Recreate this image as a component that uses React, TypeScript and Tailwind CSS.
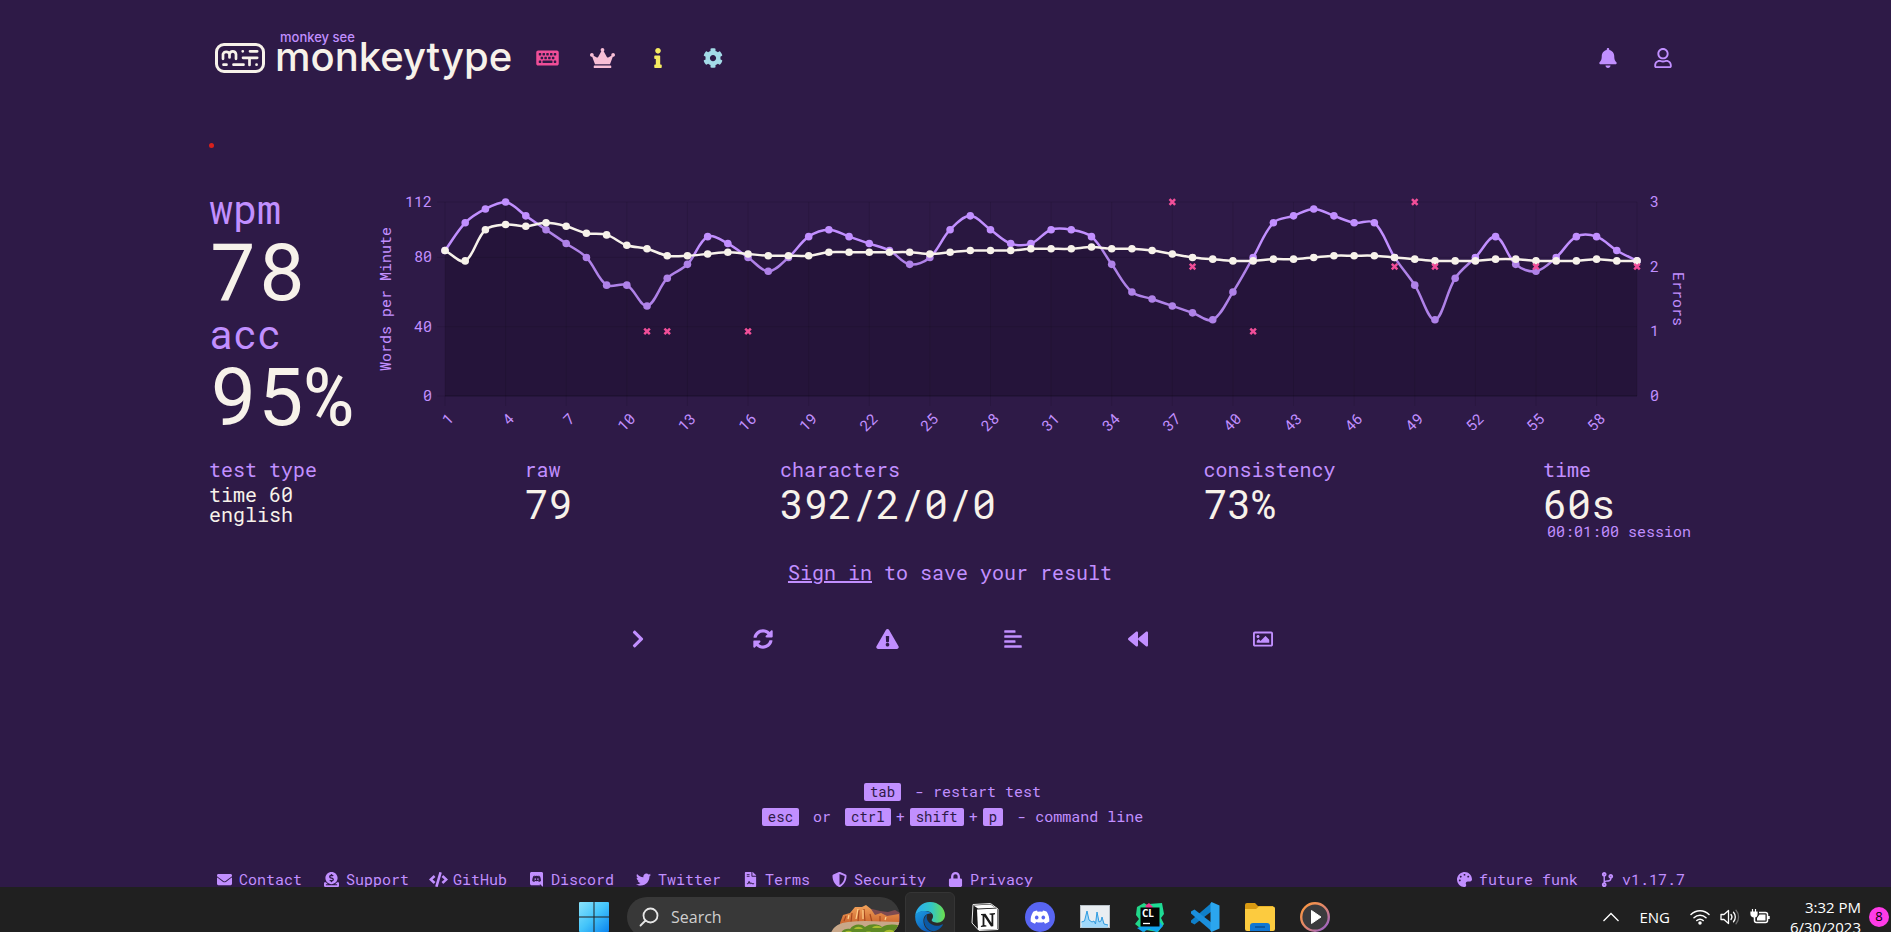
import type { ReactNode } from "react";
import {
  FaAlignLeft,
  FaBackward,
  FaBell,
  FaChevronRight,
  FaCode,
  FaCodeBranch,
  FaCog,
  FaCrown,
  FaDonate,
  FaEnvelope,
  FaExclamationTriangle,
  FaFileContract,
  FaInfo,
  FaKeyboard,
  FaLock,
  FaPalette,
  FaRegImage,
  FaRegUser,
  FaShieldAlt,
  FaSyncAlt,
  FaTwitter,
} from "react-icons/fa";

const RAW = [
  84, 100, 108, 112, 104, 96, 88, 80, 64, 64, 52, 68, 76, 92, 88, 80, 72, 80, 92, 96,
  92, 88, 84, 76, 80, 96, 104, 96, 88, 88, 96, 96, 92, 76, 60, 56, 52, 48, 44, 60,
  80, 100, 104, 108, 104, 100, 100, 80, 64, 44, 68, 80, 92, 76, 72, 80, 92, 92, 84, 78,
];
const WPM = [
  84, 78, 96, 99, 98, 100, 98, 94, 93, 87, 85, 81, 81, 82, 83, 82, 81, 81, 81, 83,
  83, 83, 83, 83, 82, 83, 84, 84, 84, 85, 85, 85, 86, 85, 85, 84, 82, 80, 79, 78,
  78, 79, 79, 80, 81, 81, 81, 80, 79, 78, 78, 78, 79, 79, 78, 78, 78, 79, 78, 78,
];
const ERRORS: [number, number][] = [
  [11, 1], [12, 1], [16, 1], [37, 3], [38, 2], [41, 1], [48, 2], [49, 3], [50, 2], [55, 2], [60, 2],
];

const LEFT = 70;
const RIGHT = 1262;
const TOP = 12;
const BOTTOM = 206;
const xAt = (second: number) => LEFT + ((second - 1) * (RIGHT - LEFT)) / 59;
const yAt = (value: number, max: number) => BOTTOM - (value * (BOTTOM - TOP)) / max;

type Point = { x: number; y: number };

function smoothPath(points: Point[], tension = 0.35) {
  const clamp = (y: number) => Math.min(BOTTOM, Math.max(TOP, y));
  const handles = points.map((p, i) => {
    const prev = points[Math.max(0, i - 1)];
    const next = points[Math.min(points.length - 1, i + 1)];
    const before = Math.hypot(p.x - prev.x, p.y - prev.y);
    const after = Math.hypot(next.x - p.x, next.y - p.y);
    const a = (tension * before) / (before + after);
    const b = (tension * after) / (before + after);
    return {
      inX: p.x - a * (next.x - prev.x),
      inY: clamp(p.y - a * (next.y - prev.y)),
      outX: p.x + b * (next.x - prev.x),
      outY: clamp(p.y + b * (next.y - prev.y)),
    };
  });
  return points
    .map((p, i) =>
      i === 0
        ? `M${p.x} ${p.y}`
        : `C${handles[i - 1].outX} ${handles[i - 1].outY} ${handles[i].inX} ${handles[i].inY} ${p.x} ${p.y}`,
    )
    .join("");
}

function Series({ values, className }: { values: number[]; className: string }) {
  const points = values.map((v, i) => ({ x: xAt(i + 1), y: yAt(v, 112) }));
  const line = smoothPath(points);
  return (
    <g className={className}>
      <path d={`${line}L${RIGHT} ${BOTTOM}L${LEFT} ${BOTTOM}Z`} fill="#000" fillOpacity="0.09" />
      <path d={line} fill="none" stroke="currentColor" strokeWidth="2.5" />
      {points.map((p) => (
        <circle key={p.x} cx={p.x} cy={p.y} r="3.8" fill="currentColor" />
      ))}
    </g>
  );
}

function ResultChart() {
  const ticks = Array.from({ length: 20 }, (_, i) => 1 + i * 3);
  return (
    <svg
      viewBox="0 0 1316 250"
      className="block w-full text-[#c18fff]"
      role="img"
      aria-label="Words per minute and errors over time"
      fontSize="15"
      fill="currentColor"
    >
      <g stroke="#000" strokeOpacity="0.1">
        {[0, 40, 80, 112].map((v) => (
          <line key={v} x1={LEFT - 8} x2={RIGHT} y1={yAt(v, 112)} y2={yAt(v, 112)} />
        ))}
        {[...ticks, 60].map((t) => (
          <line key={t} x1={xAt(t)} x2={xAt(t)} y1={TOP} y2={t === 60 ? BOTTOM : BOTTOM + 10} />
        ))}
        <line x1={LEFT} x2={RIGHT} y1={BOTTOM} y2={BOTTOM} strokeOpacity="0.2" />
      </g>
      <Series values={RAW} className="text-[#c18fff]" />
      <Series values={WPM} className="text-[#f7f2ea]" />
      <g stroke="#f04e98" strokeWidth="2.5">
        {ERRORS.map(([t, n]) => {
          const x = xAt(t);
          const y = yAt(n, 3);
          return <path key={t} d={`M${x - 2.8} ${y - 2.8}l5.6 5.6m0 -5.6l-5.6 5.6`} />;
        })}
      </g>
      {[0, 40, 80, 112].map((v) => (
        <text key={v} x="57" y={yAt(v, 112)} dy="5" textAnchor="end">{v}</text>
      ))}
      {[0, 1, 2, 3].map((v) => (
        <text key={v} x="1275" y={yAt(v, 3)} dy="5">{v}</text>
      ))}
      {ticks.map((t) => (
        <text key={t} transform={`translate(${xAt(t) + 6} 226) rotate(-45)`} dy="5" textAnchor="end">{t}</text>
      ))}
      <text transform="translate(16 109) rotate(-90)" textAnchor="middle">Words per Minute</text>
      <text transform="translate(1298 109) rotate(90)" textAnchor="middle">Errors</text>
    </svg>
  );
}

function LogoMark() {
  return (
    <svg viewBox="0 0 50 30" className="h-[30px] w-[50px]" fill="none" stroke="currentColor" strokeLinecap="round" aria-hidden="true">
      <rect x="1.5" y="1.5" width="47" height="27" rx="7.5" strokeWidth="3" />
      <g strokeWidth="2.7">
        <path d="M8 15.8V11.200a3.400 3.400 0 0 1 6.500 0v3.200M14.500 11.200a3.300 3.300 0 0 1 6.500 0v4.600" />
        <path d="M27.700 8.300h.1M35 8.300h7.200M28 14.800h14.200M34.500 15v7" />
        <path d="M8.500 21.700h3M18.500 21.700h10M41.500 21.700h.1" />
      </g>
    </svg>
  );
}

function IconButton({ label, className = "", children }: { label: string; className?: string; children: ReactNode }) {
  return (
    <button type="button" aria-label={label} className={`flex h-10 w-[55px] items-center justify-center text-xl ${className}`}>
      {children}
    </button>
  );
}

function Header() {
  return (
    <header className="flex h-10 items-center justify-between pr-px">
      <div className="flex items-center">
        <a href="#home" className="relative flex items-center gap-[10px] pl-[6px] text-[#f7f2ea]">
          <LogoMark />
          <span className="absolute -top-[8px] left-[71px] font-[Inter,sans-serif] text-[13px] leading-4 font-medium whitespace-nowrap text-[#c18fff]">
            monkey see
          </span>
          <span className="pb-[2px] font-[Inter,sans-serif] text-[40px] leading-10 font-medium">monkeytype</span>
        </a>
        <nav className="flex pl-2">
          <IconButton label="Start test" className="text-[#f04e98]"><FaKeyboard className="h-5 w-[23px]" /></IconButton>
          <IconButton label="Leaderboards" className="text-[#f8bed6]"><FaCrown className="h-5 w-[25px]" /></IconButton>
          <IconButton label="About" className="text-[#f6eb61]"><FaInfo /></IconButton>
          <IconButton label="Settings" className="text-[#a4dbe8]"><FaCog /></IconButton>
        </nav>
      </div>
      <div className="flex">
        <IconButton label="Notifications"><FaBell /></IconButton>
        <IconButton label="Account"><FaRegUser /></IconButton>
      </div>
    </header>
  );
}

function Headline({ label, value }: { label: string; value: string }) {
  return (
    <div>
      <div className="text-[40px] leading-[45px]">{label}</div>
      <div className="text-[80px] leading-[76px] text-[#f7f2ea]">{value}</div>
    </div>
  );
}

function Stat({ label, value }: { label: string; value: string }) {
  return (
    <div>
      <div className="text-xl leading-[30px]">{label}</div>
      <div className="text-[40px] leading-10 text-[#f7f2ea]">{value}</div>
    </div>
  );
}

function Key({ children }: { children: ReactNode }) {
  return (
    <kbd className="mx-[5px] inline-block rounded-[2px] bg-[#c18fff] px-1.5 font-[inherit] text-sm leading-[18px] text-[#2e1a47]">
      {children}
    </kbd>
  );
}

function DiscordBubble() {
  return (
    <svg viewBox="0 0 448 512" className="h-[15px]" fill="currentColor" aria-hidden="true">
      <path d="M297.216 243.2c0 15.616-11.52 28.416-26.112 28.416-14.336 0-26.112-12.8-26.112-28.416s11.52-28.416 26.112-28.416c14.592 0 26.112 12.8 26.112 28.416zm-119.552-28.416c-14.592 0-26.112 12.8-26.112 28.416s11.776 28.416 26.112 28.416c14.592 0 26.112-12.8 26.112-28.416.256-15.616-11.52-28.416-26.112-28.416zM448 52.736V512c-64.494-56.994-43.868-38.128-118.784-107.776l13.568 47.36H52.48C23.552 451.584 0 428.032 0 398.848V52.736C0 23.552 23.552 0 52.48 0h343.04C424.448 0 448 23.552 448 52.736zm-72.96 242.688c0-82.432-36.864-149.248-36.864-149.248-36.864-27.648-71.936-26.88-71.936-26.88l-3.584 4.096c43.52 13.312 63.744 32.512 63.744 32.512-60.811-33.329-132.244-33.335-191.232-7.424-9.472 4.352-15.104 7.424-15.104 7.424s21.248-20.224 67.328-33.536l-2.56-3.072s-35.072-.768-71.936 26.88c0 0-36.864 66.816-36.864 149.248 0 0 21.504 37.12 78.08 38.912 0 0 9.472-11.52 17.152-21.248-32.512-9.728-44.8-30.208-44.8-30.208 3.766 2.636 9.976 6.053 10.496 6.4 43.21 24.198 104.588 32.126 159.744 8.96 8.96-3.328 18.944-8.192 29.44-15.104 0 0-12.8 20.992-46.336 30.464 7.68 9.728 16.896 20.736 16.896 20.736 56.576-1.792 78.336-38.912 78.336-38.912z" />
    </svg>
  );
}

function FooterLink({ icon, children }: { icon: ReactNode; children: ReactNode }) {
  return (
    <a href="#footer" className="flex items-center gap-[5px] whitespace-nowrap">
      <span className="flex w-[19px] shrink-0 justify-center">{icon}</span>
      {children}
    </a>
  );
}

function TaskItem({ label, active = false, children }: { label: string; active?: boolean; children: ReactNode }) {
  return (
    <button
      type="button"
      aria-label={label}
      className={`flex size-[50px] shrink-0 items-center justify-center rounded-md ${active ? "border border-[#353535] bg-[#2b2b2b]" : ""}`}
    >
      {children}
    </button>
  );
}

function WindowsIcon() {
  return (
    <svg viewBox="0 0 30 30" className="size-[30px]" aria-hidden="true">
      <defs>
        <linearGradient id="win" x1="0" y1="0" x2="1" y2="1">
          <stop offset="0" stopColor="#8be3fb" />
          <stop offset="0.5" stopColor="#43c4fa" />
          <stop offset="1" stopColor="#0a84f0" />
        </linearGradient>
      </defs>
      <path d="M1 0h13.500v14.500H0V1a1 1 0 0 1 1-1zM15.500 0H29a1 1 0 0 1 1 1v13.500H15.500zM0 15.500h14.500V30H1a1 1 0 0 1-1-1zM15.500 15.500H30V29a1 1 0 0 1-1 1H15.500z" fill="url(#win)" />
    </svg>
  );
}

function CanyonArt() {
  return (
    <svg viewBox="0 0 70 40" className="h-10 w-[70px]" aria-hidden="true">
      <defs>
        <linearGradient id="rock" x1="0" y1="0" x2="0" y2="1">
          <stop offset="0" stopColor="#f3a45c" />
          <stop offset="1" stopColor="#c9602a" />
        </linearGradient>
      </defs>
      <path d="M36 13l6-1 8 2 8 1 7-2 5 3v14H36z" fill="#7d4a50" />
      <path d="M10 26l3-8 7-2 5-6 7 0 4-2 5 4 4 6 6-2 6 3 12-2v11H10z" fill="url(#rock)" />
      <path d="M14 24l2-5m5 6l1-9m6 9l1-12m6 12l-1-13m8 13l-2-8m10 8v-6" stroke="#a8481f" strokeWidth="1.200" fill="none" />
      <path d="M18 22l1-4m7 4l2-10m5 10v-9m22 10l1-3" stroke="#ffd08a" strokeWidth="1.200" fill="none" />
      <path d="M0 40c1-9 8-14 18-15 18-2 34 0 52 0v15z" fill="#c8a789" />
      <path d="M10 40c0-6 5-9 10-8 3-5 11-6 15-2 6-4 14-3 17 0 6-3 12-3 18-1v11z" fill="#5f8a24" />
      <path d="M24 32c2-3 7-3 9 0zM42 31c2-3 8-3 10 0zM14 36c2-3 7-3 9 0zM54 35c3-3 8-3 11 0zM34 36c2-2 7-2 9 0z" fill="#a9bd2f" />
    </svg>
  );
}

function EdgeIcon() {
  return (
    <svg viewBox="0 0 256 256" className="size-[30px]" aria-hidden="true">
      <defs>
        <linearGradient id="edgeA" x1="0.100" y1="0.300" x2="1" y2="0.300">
          <stop offset="0" stopColor="#2bb1ee" />
          <stop offset="0.500" stopColor="#33c6c4" />
          <stop offset="1" stopColor="#6ce04c" />
        </linearGradient>
        <linearGradient id="edgeB" x1="0" y1="0" x2="0.600" y2="1">
          <stop offset="0" stopColor="#1b9de2" />
          <stop offset="1" stopColor="#0f5cb8" />
        </linearGradient>
      </defs>
      <path d="M2 116C8 50 62 0 128 0c76 0 128 56 128 110 0 42-32 66-68 66-30 0-46-12-46-20 0-8 12-12 12-34 0-24-24-46-62-46-44 0-78 18-90 40z" fill="url(#edgeA)" />
      <path d="M2 116C10 92 44 74 84 76c24 1 46 10 58 24-40-8-70 18-70 62 0 50 36 84 74 92-6 1-12 2-18 2C56 256-4 196 2 116z" fill="url(#edgeB)" />
      <path d="M106 106c-20 12-30 34-28 60 4 46 40 82 84 84 30-6 56-26 74-52 4-6-1-9-6-6-14 8-32 12-48 10-44-4-80-36-82-70 0-10 2-18 6-26z" fill="#0c59a4" />
    </svg>
  );
}

function NotionIcon() {
  return (
    <svg viewBox="0 0 28 28" className="size-7" aria-hidden="true">
      <path d="M2 1.500L19.500.5 27 6v20.500L8 27.500 1 20z" fill="#191919" stroke="#e8e8e8" strokeLinejoin="round" />
      <path d="M6 6.500L26 5.500V26L7 27z" fill="#fff" />
      <path d="M2.500 2.500l17-1 5 3.200L7 5.600z" fill="#fff" />
      <path d="M10 11l4.500-.3 6 9.300v-8l-2-.5V10.400l5.500-.4v1.200l-1.700.6v11.400l-2.300.2-6.600-10v8.600l2 .5v1.100l-5.500.3v-1l1.700-.7V12.500l-1.600-.4z" fill="#191919" />
    </svg>
  );
}

function DiscordAppIcon() {
  return (
    <svg viewBox="0 0 30 30" className="size-[30px]" aria-hidden="true">
      <circle cx="15" cy="15" r="15" fill="#5865f2" />
      <path d="M12 8.500l.6 1.200a15 15 0 0 1 4.800 0l.6-1.200c1.500.2 2.700.6 3.800 1.300 2 3.200 2.700 6.400 2.500 9.700a13 13 0 0 1-4.300 2.200l-1.100-1.800a14 14 0 0 1-7.800 0L10 21.700a13 13 0 0 1-4.300-2.200c-.3-3.300.5-6.500 2.500-9.700 1.100-.7 2.300-1.100 3.800-1.300z" fill="#fff" />
      <ellipse cx="11.700" cy="15.600" rx="1.800" ry="2" fill="#5865f2" />
      <ellipse cx="18.300" cy="15.600" rx="1.800" ry="2" fill="#5865f2" />
    </svg>
  );
}

function MonitorIcon() {
  return (
    <svg viewBox="0 0 30 24" className="h-6 w-[30px]" aria-hidden="true">
      <rect x="0.500" y="0.500" width="29" height="22" fill="#e9eef2" stroke="#b9c2c9" />
      <path d="M1.500 17l3-1L7 6l2 9 3 2 2-1 1.500 3 1.500-12 2 10 2-1 1-4 2 7 4 1v2.500h-26.500z" fill="#9fd8fb" />
      <path d="M1.500 17l3-1L7 6l2 9 3 2 2-1 1.500 3 1.500-12 2 10 2-1 1-4 2 7 4 1" fill="none" stroke="#2f9be0" />
    </svg>
  );
}

function CLionIcon() {
  return (
    <svg viewBox="0 0 30 30" className="size-[30px]" aria-hidden="true">
      <path d="M2 5l7-4 5 3L10 30 0 22l4-5-3-4z" fill="#21d789" />
      <path d="M14 2l13-1 2 11-3 4 3 6-6 8-12-2z" fill="#1edb95" />
      <path d="M8 24l17-4 3 4-6 6-8-3-6 3-6-4z" fill="#12a4f0" />
      <path d="M10 4l4-3 4 4-4 4z" fill="#ed358c" />
      <rect x="5.500" y="5.500" width="19" height="19" fill="#050505" />
      <text x="7" y="15" fontSize="10" fontWeight="700" fontFamily="Open Sans, sans-serif" fill="#fff">CL</text>
      <path d="M8 21.500h7" stroke="#fff" strokeWidth="1.300" />
    </svg>
  );
}

function CodeEditorIcon() {
  return (
    <svg viewBox="0 0 30 30" className="size-[30px]" aria-hidden="true">
      <path d="M22 0.500V9L4.500 22.500 1 20.500v-2z" fill="#0f7fc9" />
      <path d="M22 29.500V21L4.500 7.500 1 9.500v2z" fill="#1b8fdc" />
      <path d="M21.500 0L29.500 3.500v23L21.500 30l-1-1.500v-27z" fill="#2ba6ee" />
    </svg>
  );
}

function FolderIcon() {
  return (
    <svg viewBox="0 0 30 28" className="h-7 w-[30px]" aria-hidden="true">
      <path d="M0 2a2 2 0 0 1 2-2h8l3 3h15v9H0z" fill="#d99a12" />
      <path d="M0 6h11l3-2.500h14a2 2 0 0 1 2 2V26a2 2 0 0 1-2 2H2a2 2 0 0 1-2-2z" fill="#fccb3f" />
      <path d="M5 28v-5a3 3 0 0 1 3-3h14a3 3 0 0 1 3 3v5z" fill="#1277d3" />
      <path d="M10 24h10" stroke="#0b4f94" strokeWidth="1.500" />
    </svg>
  );
}

function MediaIcon() {
  return (
    <svg viewBox="0 0 30 30" className="size-[30px]" aria-hidden="true">
      <defs>
        <linearGradient id="ring" x1="0" y1="0" x2="1" y2="1">
          <stop offset="0" stopColor="#ff9a3c" />
          <stop offset="0.500" stopColor="#e0866c" />
          <stop offset="1" stopColor="#8c5ad8" />
        </linearGradient>
      </defs>
      <circle cx="15" cy="15" r="13.800" fill="#3b3b3d" stroke="url(#ring)" strokeWidth="2.400" />
      <path d="M11.500 8.500L21 15l-9.500 6.500z" fill="#fff" stroke="#fff" strokeLinejoin="round" />
    </svg>
  );
}

function Taskbar() {
  return (
    <footer className="-mb-[15px] flex h-[60px] shrink-0 items-center bg-[#202020] font-[Open_Sans,sans-serif] text-white">
      <div className="flex-1" />
      <div className="flex items-center gap-[5px] pl-5">
        <TaskItem label="Start"><WindowsIcon /></TaskItem>
        <label className="ml-[3px] flex h-10 w-[273px] items-center overflow-hidden rounded-full bg-[#383838] pl-3">
          <svg viewBox="0 0 20 20" className="size-5 shrink-0" fill="none" stroke="#e6e6e6" strokeWidth="1.800" strokeLinecap="round" aria-hidden="true">
            <circle cx="11.500" cy="8.500" r="7" />
            <path d="M6.500 13.500l-5 5" />
          </svg>
          <input
            type="text"
            aria-label="Search"
            placeholder="Search"
            className="min-w-0 flex-1 bg-transparent pl-3 text-[16px] outline-none placeholder:text-[#cfcfcf]"
          />
          <CanyonArt />
        </label>
        <TaskItem label="Browser" active><EdgeIcon /></TaskItem>
        <TaskItem label="Notes"><NotionIcon /></TaskItem>
        <TaskItem label="Discord"><DiscordAppIcon /></TaskItem>
        <TaskItem label="Monitor"><MonitorIcon /></TaskItem>
        <TaskItem label="CLion"><CLionIcon /></TaskItem>
        <TaskItem label="Code editor"><CodeEditorIcon /></TaskItem>
        <TaskItem label="Files"><FolderIcon /></TaskItem>
        <TaskItem label="Media player"><MediaIcon /></TaskItem>
      </div>
      <div className="flex flex-1 items-center justify-end gap-5 pr-[2px]">
        <svg viewBox="0 0 16 10" className="h-[10px] w-4" fill="none" stroke="currentColor" strokeWidth="1.300" aria-hidden="true">
          <path d="M.5 9L8 1.500 15.500 9" />
        </svg>
        <span className="text-[15px]">ENG</span>
        <div className="flex items-center gap-[10px]">
          <svg viewBox="0 0 20 16" className="h-4 w-5" fill="none" stroke="currentColor" strokeWidth="1.500" strokeLinecap="round" aria-hidden="true">
            <path d="M1 5.500a12.700 12.700 0 0 1 18 0M4 8.700a8.500 8.500 0 0 1 12 0M6.800 11.500a4.500 4.500 0 0 1 6.400 0" />
            <circle cx="10" cy="14" r="1" fill="currentColor" />
          </svg>
          <svg viewBox="0 0 20 16" className="h-4 w-5" fill="none" stroke="currentColor" strokeWidth="1.300" strokeLinejoin="round" strokeLinecap="round" aria-hidden="true">
            <path d="M1 5.500h3L8.500 1.500v13L4 10.500H1zM11 5.500a4 4 0 0 1 0 5M13.500 3.300a7 7 0 0 1 0 9.400" />
            <path d="M16 1.300a10 10 0 0 1 0 13.400" stroke="#6a6a6a" />
          </svg>
          <svg viewBox="0 0 20 16" className="h-4 w-5" fill="none" stroke="currentColor" strokeWidth="1.500" aria-hidden="true">
            <path d="M9 3.500h6.500a2 2 0 0 1 2 2v6a2 2 0 0 1-2 2H6.500a2 2 0 0 1-2-2V8M19 7v3" />
            <path d="M9.500 5.500h6v6H7V9z" fill="currentColor" stroke="none" />
            <path d="M1 3h6v2a3 3 0 0 1-6 0zM2.500 0v3M5.500 0v3" fill="currentColor" strokeWidth="1.200" />
          </svg>
        </div>
        <div className="flex items-center gap-2">
          <div className="text-right text-[15px] leading-5 whitespace-nowrap">
            <div>3:32 PM</div>
            <div>6/30/2023</div>
          </div>
          <span className="flex size-5 items-center justify-center rounded-full bg-[#ff3be8] text-[13px] text-black">8</span>
        </div>
      </div>
    </footer>
  );
}

export default function App() {
  return (
    <div className="flex h-screen flex-col overflow-hidden bg-[#2e1a47] font-['Roboto_Mono','Liberation_Mono',monospace] text-[#c18fff]">
      <div className="min-h-0 flex-1 overflow-hidden">
        <div className="mx-auto max-w-[1501px] pt-[38px] pr-[5px] pl-[14px]">
          <Header />
          <div className="mt-[65px] size-[5px] rounded-full bg-[#d8201c]" />

          <main>
            <section className="mt-[38px] flex">
              <div className="flex w-[166px] shrink-0 flex-col gap-1">
                <Headline label="wpm" value="78" />
                <Headline label="acc" value="95%" />
              </div>
              <div className="max-w-[1316px] min-w-0 flex-1 pt-1">
                <ResultChart />
              </div>
            </section>

            <section className="mt-[14px] flex justify-between">
              <div>
                <div className="text-xl leading-[30px]">test type</div>
                <div className="text-xl leading-5 text-[#f7f2ea]">
                  time 60
                  <br />
                  english
                </div>
              </div>
              <Stat label="raw" value="79" />
              <Stat label="characters" value="392/2/0/0" />
              <Stat label="consistency" value="73%" />
              <div>
                <Stat label="time" value="60s" />
                <div className="pl-1 text-[15px] leading-[14px]">00:01:00 session</div>
              </div>
            </section>

            <p className="mt-[19px] text-center text-xl leading-[30px]">
              <a href="#login" className="underline decoration-2">Sign in</a> to save your result
            </p>

            <div className="mt-8 flex justify-center">
              {[
                { label: "Next test", icon: <FaChevronRight /> },
                { label: "Repeat test", icon: <FaSyncAlt /> },
                { label: "Practice words", icon: <FaExclamationTriangle className="h-5 w-[23px]" /> },
                { label: "Toggle words history", icon: <FaAlignLeft /> },
                { label: "Watch replay", icon: <FaBackward /> },
                { label: "Copy screenshot", icon: <FaRegImage /> },
              ].map((action) => (
                <button
                  key={action.label}
                  type="button"
                  aria-label={action.label}
                  className="flex h-10 w-[125px] items-center justify-center text-xl"
                >
                  {action.icon}
                </button>
              ))}
            </div>
          </main>

          <div className="mt-[120px] text-center text-[15px] leading-[25px]">
            <div><Key>tab</Key> - restart test</div>
            <div>
              <Key>esc</Key> or <Key>ctrl</Key>+<Key>shift</Key>+<Key>p</Key> - command line
            </div>
          </div>

          <div className="mt-[40px] flex justify-between px-[6px] text-[15px] leading-5">
            <nav className="flex gap-5">
              <FooterLink icon={<FaEnvelope />}>Contact</FooterLink>
              <FooterLink icon={<FaDonate />}>Support</FooterLink>
              <FooterLink icon={<FaCode className="h-[15px] w-[19px]" />}>GitHub</FooterLink>
              <FooterLink icon={<DiscordBubble />}>Discord</FooterLink>
              <FooterLink icon={<FaTwitter />}>Twitter</FooterLink>
              <FooterLink icon={<FaFileContract />}>Terms</FooterLink>
              <FooterLink icon={<FaShieldAlt />}>Security</FooterLink>
              <FooterLink icon={<FaLock />}>Privacy</FooterLink>
            </nav>
            <div className="flex gap-5">
              <FooterLink icon={<FaPalette />}>future funk</FooterLink>
              <FooterLink icon={<FaCodeBranch />}>v1.17.7</FooterLink>
            </div>
          </div>
        </div>
      </div>
      <Taskbar />
    </div>
  );
}
